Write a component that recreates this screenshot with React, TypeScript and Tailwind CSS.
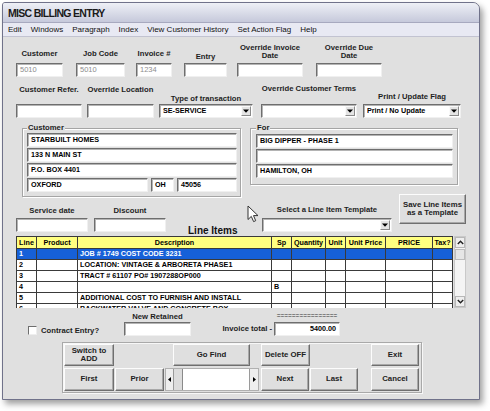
import React from "react";

const sunken =
  "bg-white border border-t-[#6e6e6e] border-l-[#6e6e6e] border-b-[#f0f0f0] border-r-[#f0f0f0] shadow-[inset_1px_1px_0_#b4b4b4]";
const raised =
  "bg-[#dfdfdf] border border-t-[#fcfcfc] border-l-[#fcfcfc] border-b-[#6f6f6f] border-r-[#6f6f6f] shadow-[inset_-1px_-1px_0_#a8a8a8]";
const lbl = "text-[7.7px] leading-[8px] font-bold text-[#1e1e1e] whitespace-nowrap";

function Input({
  cls,
  text,
  gray,
  right,
}: {
  cls: string;
  text?: string;
  gray?: boolean;
  right?: boolean;
}) {
  return (
    <div
      className={`${sunken} ${cls} flex items-center px-[3px] overflow-hidden ${
        right ? "justify-end" : ""
      }`}
    >
      {text ? (
        <span
          className={
            gray
              ? "text-[7.5px] leading-[10px] text-[#8e8e8e] whitespace-nowrap"
              : "text-[7.2px] leading-[10px] font-bold text-black whitespace-nowrap"
          }
        >
          {text}
        </span>
      ) : null}
    </div>
  );
}

function Select({ cls, text }: { cls: string; text?: string }) {
  return (
    <div className={`${sunken} ${cls} flex items-center pl-[3px] pr-[1px]`}>
      <span className="flex-1 text-[7.2px] leading-[10px] font-bold text-black whitespace-nowrap overflow-hidden">
        {text}
      </span>
      <div className="w-[10px] h-[10px] bg-[#e4e4e4] border border-t-[#fafafa] border-l-[#fafafa] border-b-[#8a8a8a] border-r-[#8a8a8a] flex items-center justify-center">
        <svg width="6" height="4" viewBox="0 0 6 4">
          <path d="M0 0.5h6L3 3.8z" fill="#000" />
        </svg>
      </div>
    </div>
  );
}

function Btn({ cls, children }: { cls: string; children: React.ReactNode }) {
  return (
    <div
      className={`${raised} ${cls} flex items-center justify-center text-center text-[7.8px] leading-[8.5px] font-bold text-[#222]`}
    >
      <span>{children}</span>
    </div>
  );
}

const cols = [
  "w-[20px]",
  "w-[41px]",
  "w-[194px]",
  "w-[20px]",
  "w-[34px]",
  "w-[20px]",
  "w-[40px]",
  "w-[47px]",
  "w-[20px]",
];
const heads = ["Line", "Product", "Description", "Sp", "Quantity", "Unit", "Unit Price", "PRICE", "Tax?"];
const rows: string[][] = [
  ["1", "", "JOB # 1749 COST CODE 3231", "", "", "", "", "", ""],
  ["2", "", "LOCATION: VINTAGE & ARBORETA  PHASE1", "", "", "", "", "", ""],
  ["3", "", "TRACT # 61107  PO# 1907288OP000", "", "", "", "", "", ""],
  ["4", "", "", "B", "", "", "", "", ""],
  ["5", "", "ADDITIONAL COST TO FURNISH AND INSTALL", "", "", "", "", "", ""],
  ["6", "", "BACKWATER VALVE AND CONCRETE BOX", "", "", "", "", "", ""],
];

function Chevron({ up }: { up?: boolean }) {
  return (
    <svg width="7" height="5" viewBox="0 0 7 5">
      <path
        d={up ? "M0.8 4L3.5 1.2L6.2 4" : "M0.8 1L3.5 3.8L6.2 1"}
        fill="none"
        stroke="#222"
        strokeWidth="1.4"
      />
    </svg>
  );
}

export default function App() {
  return (
    <div className="w-[490px] h-[411px] bg-white overflow-hidden font-['Liberation_Sans',Arial,sans-serif] pt-[2px] pl-[2px]">
      <div className="w-[478px] h-[398px] border border-[#70728a] rounded-tl-[3px] rounded-tr-[7px] shadow-[3px_4px_6px_rgba(0,0,0,0.38)] flex flex-col overflow-hidden bg-[#e0e0e0]">
        {/* title bar */}
        <div className="h-[19px] bg-linear-to-b from-[#eef0f6] to-[#c6c9db] flex items-center pl-[5px]">
          <span className="text-[10.5px] leading-[12px] font-bold tracking-[-0.7px] text-[#1a1a1a]">
            MISC BILLING ENTRY
          </span>
        </div>
        {/* menu bar */}
        <div className="h-[15px] bg-[#e8e9f3] border-t border-b border-t-[#a7a9bf] border-b-[#c2c3d1] flex items-center pl-[5px] gap-[9px] text-[8px] leading-[10px] text-[#111]">
          <span>Edit</span>
          <span>Windows</span>
          <span>Paragraph</span>
          <span>Index</span>
          <span>View Customer History</span>
          <span>Set Action Flag</span>
          <span>Help</span>
        </div>

        {/* body */}
        <div className="relative flex-1 flex flex-col pt-[3px]">
          {/* row 1 */}
          <div className="flex h-[37px]">
            <div className="ml-[13px] w-[47px] flex flex-col items-center">
              <div className="h-[23px] flex flex-col justify-end items-center pb-[5px]">
                <span className={lbl}>Customer</span>
              </div>
              <Input cls="w-[47px] h-[14px]" text="5010" gray />
            </div>
            <div className="ml-[13px] w-[49px] flex flex-col items-center">
              <div className="h-[23px] flex flex-col justify-end items-center pb-[5px]">
                <span className={lbl}>Job Code</span>
              </div>
              <Input cls="w-[49px] h-[14px]" text="5010" gray />
            </div>
            <div className="ml-[11px] w-[36px] flex flex-col items-center">
              <div className="h-[23px] flex flex-col justify-end items-center pb-[5px]">
                <span className={lbl}>Invoice #</span>
              </div>
              <Input cls="w-[36px] h-[14px]" text="1234" gray />
            </div>
            <div className="ml-[12px] w-[43px] flex flex-col items-center">
              <div className="h-[23px] flex flex-col justify-end items-center pb-[2px]">
                <span className={lbl}>Entry</span>
              </div>
              <Input cls="w-[43px] h-[14px]" />
            </div>
            <div className="ml-[10px] w-[66px] flex flex-col items-center">
              <div className="h-[23px] flex flex-col justify-end items-center pb-[3px] text-center">
                <span className={lbl}>Override Invoice</span>
                <span className={lbl}>Date</span>
              </div>
              <Input cls="w-[66px] h-[14px]" />
            </div>
            <div className="ml-[13px] w-[66px] flex flex-col items-center">
              <div className="h-[23px] flex flex-col justify-end items-center pb-[3px] text-center">
                <span className={lbl}>Override Due</span>
                <span className={lbl}>Date</span>
              </div>
              <Input cls="w-[66px] h-[14px]" />
            </div>
          </div>

          {/* row 2 */}
          <div className="flex h-[41px]">
            <div className="ml-[13px] w-[66px] flex flex-col items-center">
              <div className="h-[27px] flex flex-col justify-end items-center pb-[10px]">
                <span className={lbl}>Customer Refer.</span>
              </div>
              <Input cls="w-[66px] h-[14px]" />
            </div>
            <div className="ml-[5px] w-[67px] flex flex-col items-center">
              <div className="h-[27px] flex flex-col justify-end items-center pb-[10px]">
                <span className={lbl}>Override Location</span>
              </div>
              <Input cls="w-[67px] h-[14px]" />
            </div>
            <div className="ml-[5px] w-[94px] flex flex-col items-center">
              <div className="h-[27px] flex flex-col justify-end items-center pb-[1px]">
                <span className={lbl}>Type of transaction</span>
              </div>
              <Select cls="w-[94px] h-[14px]" text="SE-SERVICE" />
            </div>
            <div className="ml-[8px] w-[96px] flex flex-col items-center">
              <div className="h-[27px] flex flex-col justify-end items-center pb-[11px]">
                <span className={lbl}>Override Customer Terms</span>
              </div>
              <Select cls="w-[96px] h-[14px]" />
            </div>
            <div className="ml-[6px] w-[98px] flex flex-col items-center">
              <div className="h-[27px] flex flex-col justify-end items-center pb-[3px]">
                <span className={lbl}>Print / Update Flag</span>
              </div>
              <Select cls="w-[98px] h-[14px]" text="Print / No Update" />
            </div>
          </div>

          {/* group boxes section */}
          <div className="mt-[10px] h-[108px] flex">
            <div className="ml-[13px] w-[225px] flex flex-col">
              <div className="ml-[6px] w-[219px] h-[69px] relative border border-[#a5a5a5] shadow-[inset_1px_1px_0_#ffffff,1px_1px_0_#ffffff] pt-[4px] pl-[4px] pr-[3px] flex flex-col gap-[1px]">
                <span className={`absolute left-[4px] top-[-5px] px-[1px] bg-[#e0e0e0] ${lbl}`}>Customer</span>
                <Input cls="w-full h-[14px]" text="STARBUILT HOMES" />
                <Input cls="w-full h-[14px]" text="133 N MAIN ST" />
                <Input cls="w-full h-[14px]" text="P.O. BOX 4401" />
                <div className="flex gap-[3px]">
                  <Input cls="w-[121px] h-[14px]" text="OXFORD" />
                  <Input cls="w-[23px] h-[14px]" text="OH" />
                  <Input cls="w-[60px] h-[14px]" text="45056" />
                </div>
              </div>
              <div className="flex">
                <div className="w-[72px] flex flex-col items-center">
                  <span className={`mt-[10px] ${lbl}`}>Service date</span>
                  <Input cls="mt-[3px] w-[72px] h-[14px]" />
                </div>
                <div className="ml-[6px] w-[72px] flex flex-col items-center">
                  <span className={`mt-[10px] ${lbl}`}>Discount</span>
                  <Input cls="mt-[3px] w-[72px] h-[14px]" />
                </div>
                <span className="ml-[22px] mt-[29px] text-[10px] leading-[10px] font-bold text-[#111] whitespace-nowrap">
                  Line Items
                </span>
              </div>
            </div>

            <div className="ml-[9px] w-[216px] flex flex-col">
              <div className="w-[208px] h-[57px] relative border border-[#a5a5a5] shadow-[inset_1px_1px_0_#ffffff,1px_1px_0_#ffffff] pt-[5px] pl-[5px] pr-[4px] flex flex-col gap-[1px]">
                <span className={`absolute left-[5px] top-[-5px] px-[1px] bg-[#e0e0e0] ${lbl}`}>For</span>
                <Input cls="w-full h-[14px]" text="BIG DIPPER  -  PHASE 1" />
                <Input cls="w-full h-[14px]" />
                <Input cls="w-full h-[14px]" text="HAMILTON, OH" />
              </div>
              <div className="flex">
                <div className="ml-[12px] w-[130px] flex flex-col items-center">
                  <span className={`mt-[21px] ${lbl}`}>Select a Line Item Template</span>
                  <Select cls="mt-[4px] w-[130px] h-[14px]" />
                </div>
                <Btn cls="ml-[7px] mt-[9px] w-[67px] h-[30px]">
                  Save Line Items
                  <br />
                  as a Template
                </Btn>
              </div>
            </div>
          </div>

          {/* table */}
          <div className="flex h-[72px]">
            <div className="ml-[13px] w-[437px] h-[72px] overflow-hidden border-t border-l border-[#3a3a3a] bg-white">
              <div className="flex h-[12px] bg-[#ffff80]">
                {heads.map((h, i) => (
                  <div
                    key={i}
                    className={`${cols[i]} h-[12px] border-r border-b border-[#3a3a3a] flex items-center justify-center text-[7.2px] leading-[10px] font-bold text-black whitespace-nowrap overflow-hidden`}
                  >
                    {h}
                  </div>
                ))}
              </div>
              {rows.map((r, ri) => (
                <div key={ri} className={`flex h-[11px] ${ri === 0 ? "bg-[#1660d8]" : "bg-white"}`}>
                  {r.map((c, ci) => (
                    <div
                      key={ci}
                      className={`${cols[ci]} h-[11px] border-r border-b border-[#3a3a3a] flex items-center pl-[2px] text-[7.2px] leading-[10px] font-bold whitespace-nowrap overflow-hidden ${
                        ri === 0 ? "text-white" : "text-black"
                      }`}
                    >
                      {c}
                    </div>
                  ))}
                </div>
              ))}
            </div>
            <div className="ml-[1px] w-[12px] h-[72px] bg-[#f4f4f4] border border-[#c9c9c9] flex flex-col">
              <div className="h-[11px] bg-[#eeeeee] border border-[#b8b8b8] flex items-center justify-center">
                <Chevron up />
              </div>
              <div className="h-[11px] mt-[1px] bg-[#e6e6e6] border border-[#bdbdbd]" />
              <div className="flex-1" />
              <div className="h-[11px] bg-[#eeeeee] border border-[#b8b8b8] flex items-center justify-center">
                <Chevron />
              </div>
            </div>
          </div>

          {/* bottom fields row */}
          <div className="flex items-end h-[28px]">
            <div className="ml-[25px] w-[96px] flex items-center mb-[1px]">
              <div className="w-[9px] h-[9px] bg-white border border-t-[#6e6e6e] border-l-[#6e6e6e] border-b-[#eeeeee] border-r-[#eeeeee]" />
              <span className={`ml-[4px] ${lbl}`}>Contract Entry?</span>
            </div>
            <div className="w-[67px] flex flex-col items-center">
              <span className={`mb-[1px] ${lbl}`}>New Retained</span>
              <Input cls="w-[67px] h-[14px]" />
            </div>
            <div className="w-[83px] flex justify-end pr-[2px] mb-[3px]">
              <span className={lbl}>Invoice total -</span>
            </div>
            <div className="w-[66px] flex flex-col items-center">
              <span className="mb-[4px] text-[6.5px] leading-[5px] text-[#333] whitespace-nowrap">
                ================
              </span>
              <Input cls="w-[66px] h-[14px]" text="5400.00" right />
            </div>
          </div>

          {/* button panel */}
          <div className="ml-[59px] mt-[6px] w-[360px] h-[51px] border border-[#a9a9a9] shadow-[inset_1px_1px_0_#f7f7f7,1px_1px_0_#f7f7f7] pl-[1px] pt-[1px] flex flex-col">
            <div className="flex h-[22px]">
              <Btn cls="w-[50px] h-[22px]">
                Switch to
                <br />
                ADD
              </Btn>
              <Btn cls="ml-[59px] w-[77px] h-[22px]">Go Find</Btn>
              <Btn cls="ml-[11px] w-[49px] h-[22px]">Delete OFF</Btn>
              <Btn cls="ml-[61px] w-[48px] h-[22px]">Exit</Btn>
            </div>
            <div className="flex h-[23px] mt-[2px]">
              <Btn cls="w-[50px] h-[23px]">First</Btn>
              <Btn cls="ml-[1px] w-[49px] h-[23px]">Prior</Btn>
              <div className="ml-[1px] w-[94px] h-[23px] flex bg-white border border-[#b0b0b0]">
                <div className="w-[8px] h-full bg-[#eeeeee] border-r border-[#9a9a9a] flex items-center justify-center">
                  <svg width="3" height="5" viewBox="0 0 3 5">
                    <path d="M3 0v5L0 2.5z" fill="#000" />
                  </svg>
                </div>
                <div className="w-[9px] h-full bg-[#dcdcdc] border-r border-[#8a8a8a]" />
                <div className="flex-1" />
                <div className="w-[9px] h-full bg-[#eeeeee] border-l border-[#9a9a9a] flex items-center justify-center">
                  <svg width="3" height="5" viewBox="0 0 3 5">
                    <path d="M0 0v5L3 2.5z" fill="#000" />
                  </svg>
                </div>
              </div>
              <Btn cls="ml-[2px] w-[48px] h-[23px]">Next</Btn>
              <Btn cls="ml-[1px] w-[48px] h-[23px]">Last</Btn>
              <Btn cls="ml-[13px] w-[48px] h-[23px]">Cancel</Btn>
            </div>
          </div>

          {/* mouse cursor */}
          <svg
            className="absolute left-[244px] top-[168px]"
            width="13"
            height="19"
            viewBox="0 0 13 19"
          >
            <path
              d="M1 1 L1 14.5 L4.3 11.4 L6.6 16.6 L8.7 15.7 L6.5 10.6 L11 10.6 Z"
              fill="#ffffff"
              stroke="#333"
              strokeWidth="1"
              strokeLinejoin="round"
            />
          </svg>
        </div>
      </div>
    </div>
  );
}
